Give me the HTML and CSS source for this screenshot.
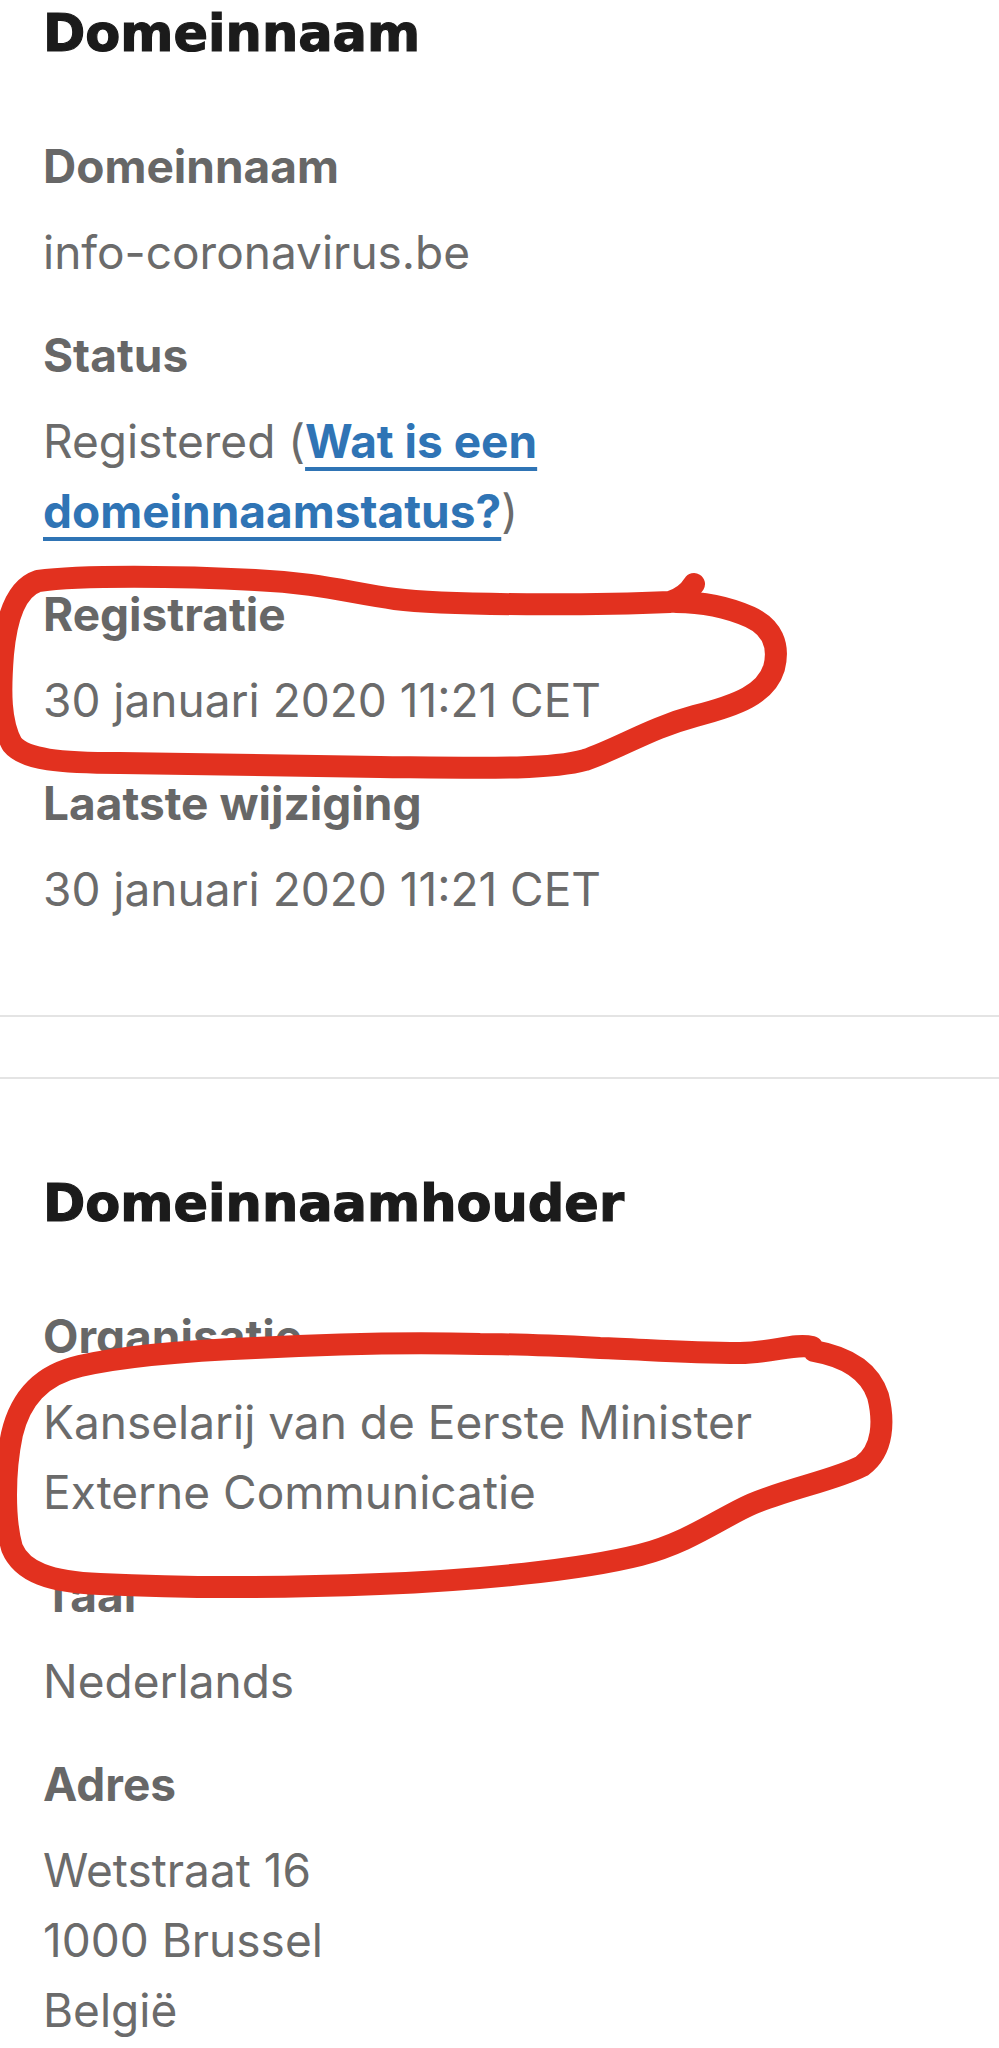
FILE: index.html
```html
<!DOCTYPE html>
<html lang="nl">
<head>
<meta charset="utf-8">
<title>Domeinnaam – info-coronavirus.be</title>
<link rel="stylesheet" href="styles.css">
</head>
<body>
<main class="page">
  <section class="block">
    <h1 class="title">Domeinnaam</h1>
    <dl class="fields">
      <div class="field">
        <dt class="label">Domeinnaam</dt>
        <dd class="value">info-coronavirus.be</dd>
      </div>
      <div class="field">
        <dt class="label">Status</dt>
        <dd class="value">Registered (<a class="link" href="#">Wat is een domeinnaamstatus?</a>)</dd>
      </div>
      <div class="field">
        <dt class="label">Registratie</dt>
        <dd class="value">30 januari 2020 11:21 CET</dd>
      </div>
      <div class="field">
        <dt class="label">Laatste wijziging</dt>
        <dd class="value">30 januari 2020 11:21 CET</dd>
      </div>
    </dl>
  </section>

  <div class="divider"></div>

  <section class="block block-second">
    <h2 class="title">Domeinnaamhouder</h2>
    <dl class="fields">
      <div class="field">
        <dt class="label">Organisatie</dt>
        <dd class="value">Kanselarij van de Eerste Minister<br>Externe Communicatie</dd>
      </div>
      <div class="field">
        <dt class="label">Taal</dt>
        <dd class="value">Nederlands</dd>
      </div>
      <div class="field">
        <dt class="label">Adres</dt>
        <dd class="value">Wetstraat 16<br>1000 Brussel<br>België</dd>
      </div>
    </dl>
  </section>
</main>

<svg class="scribbles" width="999" height="2048" viewBox="0 0 999 2048" aria-hidden="true">
  <path class="scribble" d="M 694 584
    Q 686 597 670 602
    C 600 605 450 606 395 599
    C 350 593 320 583 255 580
    C 180 576 80 575 38 581
    C 14 589 6 622 3 654
    C 0 692 0 722 12 744
    C 25 760 60 763 120 763
    L 380 767
    C 480 768 550 770 585 760
    C 620 748 650 728 695 716
    C 738 705 766 694 774 668
    C 780 645 772 627 750 617
    C 725 606 700 602 676 602"/>
  <path class="scribble" d="M 812 1347
    C 794 1343 772 1353 740 1353
    C 680 1353 640 1349 600 1348
    C 560 1346 520 1344 480 1344
    C 400 1342 330 1344 255 1348
    C 180 1351 120 1357 80 1366
    C 40 1375 20 1400 12 1434
    C 4 1472 4 1520 12 1548
    C 22 1572 50 1582 100 1584
    C 180 1588 280 1588 380 1584
    C 480 1580 580 1570 640 1555
    C 690 1542 720 1518 752 1504
    C 790 1488 835 1480 862 1466
    C 884 1450 884 1420 878 1396
    C 870 1372 848 1357 814 1351"/>
</svg>
</body>
</html>
```
FILE: styles.css
```css
* {
  box-sizing: border-box;
}

body {
  margin: 0;
  position: relative;
  background: #ffffff;
  font-family: Inter, "Noto Sans", sans-serif;
  color: #666666;
}

.page {
  padding: 4px 43px 0;
}

.title {
  margin: 0;
  font-family: "DejaVu Sans", sans-serif;
  font-weight: 700;
  font-size: 51px;
  line-height: 60px;
  color: #1b1b1b;
  -webkit-text-stroke: 1.2px #1b1b1b;
}

.fields {
  margin: 79px 0 0;
}

.field + .field {
  margin-top: 45px;
}

.label {
  margin: 0;
  font-weight: 700;
  font-size: 46px;
  line-height: 46px;
  color: #676767;
}

.value {
  margin: 28px 0 0;
  font-weight: 400;
  font-size: 46px;
  line-height: 70px;
  color: #6b6b6b;
}

.link {
  color: #2f74b5;
  font-weight: 700;
  text-decoration: underline;
  text-decoration-thickness: 4px;
  text-underline-offset: 9px;
}

.divider {
  margin: 91px -43px 0;
  height: 64px;
  border-top: 2px solid #e4e4e4;
  border-bottom: 2px solid #e4e4e4;
}

.block-second .title {
  margin-top: 95px;
}

.scribbles {
  position: absolute;
  top: 0;
  left: 0;
  pointer-events: none;
}

.scribble {
  fill: none;
  stroke: #e2311f;
  stroke-width: 22;
  stroke-linecap: round;
  stroke-linejoin: round;
}
```
